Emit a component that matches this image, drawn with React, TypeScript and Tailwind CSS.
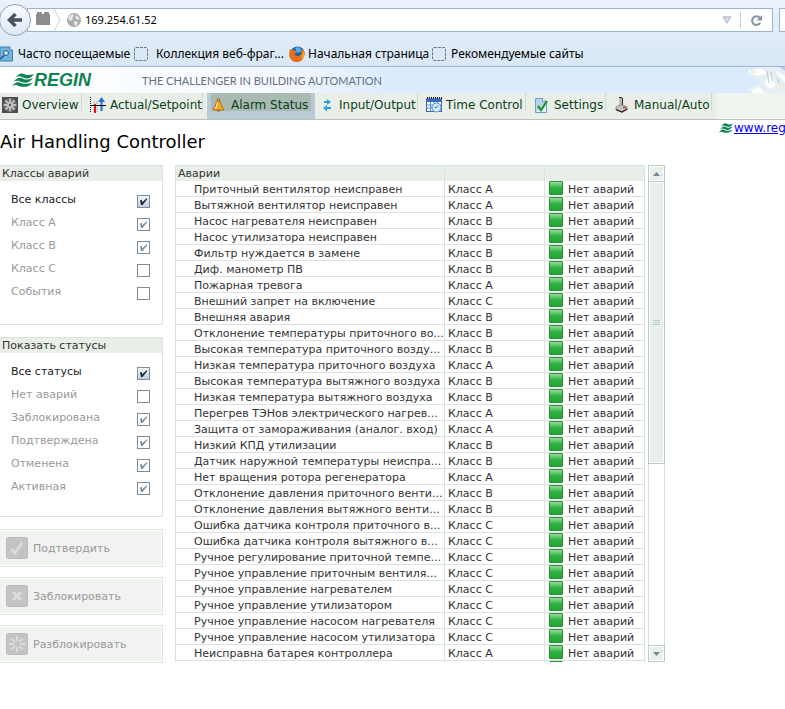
import type { ReactNode } from "react";

const alarms: [string, string][] = [
  ["Приточный вентилятор неисправен", "A"],
  ["Вытяжной вентилятор неисправен", "A"],
  ["Насос нагревателя неисправен", "B"],
  ["Насос утилизатора неисправен", "B"],
  ["Фильтр нуждается в замене", "B"],
  ["Диф. манометр ПВ", "B"],
  ["Пожарная тревога", "A"],
  ["Внешний запрет на включение", "C"],
  ["Внешняя авария", "B"],
  ["Отклонение температуры приточного во...", "B"],
  ["Высокая температура приточного возду...", "B"],
  ["Низкая температура приточного воздуха", "A"],
  ["Высокая температура вытяжного воздуха", "B"],
  ["Низкая температура вытяжного воздуха", "B"],
  ["Перегрев ТЭНов электрического нагрев...", "A"],
  ["Защита от замораживания (аналог. вход)", "A"],
  ["Низкий КПД утилизации", "B"],
  ["Датчик наружной температуры неиспра...", "B"],
  ["Нет вращения ротора регенератора", "A"],
  ["Отклонение давления приточного венти...", "B"],
  ["Отклонение давления вытяжного венти...", "B"],
  ["Ошибка датчика контроля приточного в...", "C"],
  ["Ошибка датчика контроля вытяжного в...", "C"],
  ["Ручное регулирование приточной темпе...", "C"],
  ["Ручное управление приточным вентиля...", "C"],
  ["Ручное управление нагревателем", "C"],
  ["Ручное управление утилизатором", "C"],
  ["Ручное управление насосом нагревателя", "C"],
  ["Ручное управление насосом утилизатора", "C"],
  ["Неисправна батарея контроллера", "A"],
];

type Option = { label: string; checked: boolean; enabled?: boolean };

const classes: Option[] = [
  { label: "Все классы", checked: true, enabled: true },
  { label: "Класс A", checked: true },
  { label: "Класс B", checked: true },
  { label: "Класс C", checked: false },
  { label: "События", checked: false },
];

const statuses: Option[] = [
  { label: "Все статусы", checked: true, enabled: true },
  { label: "Нет аварий", checked: false },
  { label: "Заблокирована", checked: true },
  { label: "Подтверждена", checked: true },
  { label: "Отменена", checked: true },
  { label: "Активная", checked: true },
];

function Waves({ className }: { className: string }) {
  return (
    <svg viewBox="0 0 24 16" className={className} preserveAspectRatio="none" aria-hidden="true">
      <g fill="#0d8350">
        <path d="M4 5C8-1 12 0 15 2c3 1 6 0 9-1-4 6-8 6-12 4-3-1-5-2-8 0z" />
        <path d="M2 10C6 4 10 5 13 7c3 1 6 0 10-1-5 6-9 6-13 4-3-1-5-2-8 0z" />
        <path d="M0 15c4-6 8-5 11-3 4 1 7 0 12-1-6 6-10 5-15 4-3-1-5-2-8 0z" />
      </g>
    </svg>
  );
}

function FanIcon() {
  return (
    <svg viewBox="0 0 16 16" className="size-4" aria-hidden="true">
      <rect width="16" height="16" fill="#4c4c4c" />
      <circle cx="8" cy="8" r="7" fill="#6a6a6a" />
      <g stroke="#c4c4c4" strokeWidth="1.800" strokeLinecap="round">
        <path d="M8 2.500v11M2.500 8h11M4 4l8 8M12 4l-8 8" />
      </g>
      <circle cx="8" cy="8" r="1.200" fill="#555" />
    </svg>
  );
}

function SetpointIcon() {
  return (
    <svg viewBox="0 0 16 16" className="size-4" aria-hidden="true">
      <path d="M.5 0v16" stroke="#222" strokeDasharray="1 1" />
      <path d="M4 15V5h3v10" fill="none" stroke="#999" strokeDasharray="1 1" />
      <path d="M4 7h2v9H4z" fill="#e3151b" />
      <path d="M10.500 14V5H8l3.500-5L15 5h-2.500v9z" fill="#1e70dc" />
      <path d="M0 8.500h16" stroke="#000" />
    </svg>
  );
}

function BellIcon() {
  return (
    <svg viewBox="0 0 16 16" className="size-4" aria-hidden="true">
      <circle cx="7.500" cy="3" r="1.500" fill="#e9a23a" stroke="#9a5a10" strokeWidth=".7" />
      <path d="M6.500 4C4.500 5.500 5 9 2.500 11.500V13h10v-1.500C10 9 10.500 5.500 8.500 4z" fill="#f5a623" stroke="#a85d0c" strokeWidth=".8" />
      <path d="M6.500 5.500c-1 2-.5 4-2 6" stroke="#ffe3a0" strokeWidth="1.300" fill="none" />
      <path d="M6 13h3l-.5 1.500h-2z" fill="#9c5210" />
    </svg>
  );
}

function InOutIcon() {
  return (
    <svg viewBox="0 0 16 16" className="size-4" aria-hidden="true">
      <path d="M5 4h3V2l4 3-4 3V6H5z" fill="#27a0dc" />
      <path d="M12 10H8V8l-4 3 4 3.500V12h4z" fill="#27a0dc" />
    </svg>
  );
}

function CalendarIcon() {
  return (
    <svg viewBox="0 0 16 16" className="size-4" aria-hidden="true">
      <rect x=".5" y="2" width="15" height="12.500" fill="#fff" stroke="#3568b5" />
      <path d="M1 2h14v3H1z" fill="#356bc0" />
      <path d="M1 1h15" stroke="#222" strokeWidth="2" strokeDasharray="1 1" />
      <path d="M1 8h14M1 11h14M4.500 5v9M8 5v9M11.500 5v9" stroke="#5b8ad0" />
      <circle cx="10.500" cy="10.500" r="4.500" fill="#d6eaff" stroke="#5d96dc" strokeWidth="1.200" />
      <path d="M10.500 10.500 12.500 8.500M10.500 10.500h-2" stroke="#24457e" strokeWidth=".8" />
    </svg>
  );
}

function SettingsIcon() {
  return (
    <svg viewBox="0 0 16 16" className="size-4" aria-hidden="true">
      <path d="M1.500 1.500h7l4 3v11h-11z" fill="#b5d5ea" stroke="#6ba0c2" />
      <path d="M2 15L12 5v10z" fill="#e2f0f8" />
      <path d="M8.500 1.500v3h4" fill="#fff" stroke="#6ba0c2" />
      <path d="M4 9l3 4 6-9" fill="none" stroke="#21922b" strokeWidth="2.200" />
    </svg>
  );
}

function JoystickIcon() {
  return (
    <svg viewBox="0 0 16 16" className="size-4" aria-hidden="true">
      <path d="M5 1h3v8H5z" fill="#bbb" />
      <path d="M8.500 1v8M5 .500h3" stroke="#222" />
      <path d="M2 10l4-2h3l4 2v2l-5 3-6-2z" fill="#c4c4c4" stroke="#777" strokeWidth=".7" />
      <path d="M2 12.500 8 15l5.500-3" stroke="#222" strokeWidth="1.300" fill="none" />
      <path d="M9 10.500h3" stroke="#c1342e" strokeWidth="1.500" />
    </svg>
  );
}

function NavItem({ icon, label, width, active }: { icon: ReactNode; label: string; width: string; active?: boolean }) {
  return (
    <a
      href="#"
      aria-current={active ? "page" : undefined}
      className={`flex h-[26px] shrink-0 items-start ${width} ${active ? "bg-[#b9cad5] px-1" : ""}`}
    >
      <span
        className={`flex h-[18px] grow items-start gap-1 whitespace-nowrap ${active ? "bg-[#a9bab2]" : "border-r border-[#ccdad0]"}`}
      >
        <span className="pt-1">{icon}</span>
        <span className="pt-1 leading-4">{label}</span>
      </span>
    </a>
  );
}

function FilterPanel({ title, options }: { title: string; options: Option[] }) {
  return (
    <fieldset className="border-y border-r border-[#dae5d9] pb-5">
      <legend className="float-left mb-[11px] h-[15px] w-full bg-[#e9efe8] pl-[2px] leading-[15px] text-[#333]">{title}</legend>
      {options.map((o) => (
        <label key={o.label} className="clear-both flex h-[23px] justify-between pr-3 pl-[11px]">
          <span className={`leading-4 ${o.enabled ? "text-[#222]" : "text-[#999]"}`}>{o.label}</span>
          <span className="mt-[3px] grid size-[13px]">
            <input
              type="checkbox"
              defaultChecked={o.checked}
              disabled={!o.enabled}
              className={`col-start-1 row-start-1 size-[13px] appearance-none border border-[#7b8c9a] ${o.enabled ? "bg-linear-to-b from-[#f3f7fb] to-[#bdd0e4]" : "bg-white"}`}
            />
            {o.checked && (
              <svg viewBox="0 0 13 13" className="pointer-events-none col-start-1 row-start-1 size-[13px]" aria-hidden="true">
                <path d="M3 5.500 5 5v2.500L10 3v1.500L5.500 10H4z" fill={o.enabled ? "#222" : "#7b8b99"} />
              </svg>
            )}
          </span>
        </label>
      ))}
    </fieldset>
  );
}

function ActionButton({ label, children }: { label: string; children: ReactNode }) {
  return (
    <button type="button" disabled className="flex h-[38px] w-full border-y border-r border-[#dae5d9] bg-white py-px pr-px text-[#999]">
      <span className="flex h-[34px] w-full items-center gap-[5px] bg-[#f1f3f1] pl-[6px]">
        <svg viewBox="0 0 22 22" className="size-[22px]" aria-hidden="true">
          <rect x=".5" y=".5" width="21" height="21" rx="2" fill="#c4c4c4" stroke="#bbb" />
          <g fill="none" stroke="#dcdcdc">{children}</g>
        </svg>
        <span className="pt-[2px]">{label}</span>
      </span>
    </button>
  );
}

function StatusLight() {
  return (
    <svg viewBox="0 0 14 14" className="size-[14px]" aria-hidden="true">
      <defs>
        <linearGradient id="light" x1="0" y1="0" x2="0" y2="1">
          <stop offset="0" stopColor="#a5dca6" />
          <stop offset=".5" stopColor="#2fb03c" />
          <stop offset="1" stopColor="#1fa830" />
        </linearGradient>
      </defs>
      <rect x=".5" y=".5" width="13" height="13" rx=".5" fill="url(#light)" stroke="#259234" />
    </svg>
  );
}

function BlankPageIcon() {
  return (
    <svg viewBox="0 0 14 14" className="size-[14px] shrink-0" aria-hidden="true">
      <rect x=".5" y=".5" width="13" height="13" rx="1.500" fill="none" stroke="#777" strokeDasharray="3 1" />
    </svg>
  );
}

function Chrome() {
  return (
    <div className="h-[67px] border-b border-[#a2b8d2] bg-linear-to-b from-[#eaf2fb] to-[#d8e7f6] font-['Noto_Sans','Open_Sans',sans-serif] text-[12px] text-black">
      <div className="flex h-10 items-center">
        <button type="button" aria-label="Назад" className="z-10 -ml-px size-8 shrink-0 rounded-full border border-[#8fa3bd] bg-linear-to-b from-[#fafcff] to-[#dce8f5]">
          <svg viewBox="0 0 30 30" className="size-[30px]" aria-hidden="true">
            <path d="M22 15H10M15.500 9l-6 6 6 6" fill="none" stroke="#49525f" strokeWidth="3.500" />
          </svg>
        </button>
        <div className="-ml-1 flex h-6 grow items-center border border-[#9db1ca] bg-white pl-2">
          <svg viewBox="0 0 26 22" className="h-[22px] w-[26px] shrink-0" aria-hidden="true">
            <path d="M0 5h14v11H0zM1 3h5v3H1zM8 3h5v3H8z" fill="#8c8c8c" />
            <path d="M18 0l6 11-6 11" fill="none" stroke="#ccc" />
          </svg>
          <svg viewBox="0 0 14 14" className="ml-[5px] size-[14px] shrink-0" aria-hidden="true">
            <circle cx="7" cy="7" r="7" fill="#aaa" />
            <path d="M2 3l4-2 1 2-2 2 1 2-2 1-3-2zM9 2l4 3-2 2-3-2zM7 8l4 1-1 3-2 1-1-2z" fill="#e6e6e6" />
          </svg>
          <input type="text" aria-label="Адрес" defaultValue="169.254.61.52" className="ml-1 min-w-0 grow bg-transparent text-[11px]" />
          <svg viewBox="0 0 12 10" className="mr-2 h-2 w-[10px]" aria-hidden="true">
            <path d="M1 1h10L6 9z" fill="#d5dde6" stroke="#9da9b8" />
          </svg>
          <button type="button" aria-label="Обновить" className="flex h-4 w-8 items-center justify-center border-l border-[#ccc]">
            <svg viewBox="0 0 14 14" className="size-[13px]" aria-hidden="true">
              <path d="M11 9.500A4.700 4.700 0 1 1 10.500 4" fill="none" stroke="#8493a6" strokeWidth="2.200" />
              <path d="M13 1v6H7z" fill="#8493a6" />
            </svg>
          </button>
        </div>
        <input type="text" aria-label="Поиск" className="ml-[6px] h-6 w-[6px] shrink-0 border-y border-l border-[#9db1ca] bg-white" />
      </div>
      <nav className="flex h-[26px] items-center pt-px whitespace-nowrap">
        <a href="#" className="flex w-[134px] items-center gap-[5px]">
          <svg viewBox="0 0 13 16" className="h-4 w-[13px]" aria-hidden="true">
            <path d="M0 1h10v3h2.500v11H0z" fill="#72b4dc" stroke="#3981b1" />
            <circle cx="6" cy="7" r="2.500" fill="#cce9fb" stroke="#24567e" />
            <path d="M4.500 9l-4 4" stroke="#24567e" strokeWidth="1.500" />
          </svg>
          Часто посещаемые
        </a>
        <a href="#" className="flex w-[155px] items-center gap-2">
          <BlankPageIcon />
          Коллекция веб-фраг...
        </a>
        <a href="#" className="flex w-[143px] items-center gap-[3px]">
          <svg viewBox="0 0 16 16" className="size-4 shrink-0" aria-hidden="true">
            <circle cx="8.500" cy="7.500" r="7" fill="#1e5fae" />
            <path d="M6 2c4-2 7 1 6 4-2-1-2 1-4 1z" fill="#52b3e6" />
            <path d="M1 3c1 0 2 1 3 1 2 0 3 1 4 3-2 0-3 1-2 2 2 2 5 1 6-1 1-3 0-4 2-5 2 3 2 8-1 11-4 4-11 2-12.500-3C-.3 8 .5 5 1 3z" fill="#e8701a" />
            <path d="M14 4c1.500 3 1 7-1.500 9.500 0-3 2-5 1.500-9.500z" fill="#f9c62f" />
          </svg>
          Начальная страница
        </a>
        <a href="#" className="flex items-center gap-[5px]">
          <BlankPageIcon />
          Рекомендуемые сайты
        </a>
      </nav>
    </div>
  );
}

export default function App() {
  return (
    <div className="overflow-x-hidden bg-white font-['DejaVu_Sans',Verdana,sans-serif] text-[11px] text-[#333]">
      <Chrome />
      <header className="flex h-[26px] items-center bg-linear-to-r from-white from-0% via-[#f4f9ff] via-35% to-[#dbebfe] to-50%">
        <Waves className="ml-3 h-[14px] w-[22px] shrink-0" />
        <span className="w-[108px] shrink-0 font-['Liberation_Sans',Arial,sans-serif] text-[18px] leading-6 font-bold text-[#0d8350] italic">REGIN</span>
        <span className="grow pt-[3px] font-['Lato',sans-serif] text-[11px] whitespace-nowrap text-[#657080]">THE CHALLENGER IN BUILDING AUTOMATION</span>
        <svg viewBox="0 0 44 26" className="h-[26px] w-11 shrink-0" aria-hidden="true">
          <path d="M8 2l12-2h24v26H10L6 23l8-5 6-2-3-4-10-5z" fill="#e6eff3" />
          <path d="M6 4l13-3 8 5-9 3zM23 17l6-8 6 9-6 4zM34 4l10 5v7zM10 24l8-4 6 6H12z" fill="#fff" />
          <path d="M26 4l2 12M30 5l1 9M36 10l3 9" stroke="#bccfc9" />
          <path d="M38 0h6v4z" fill="#b5cdee" />
          <path d="M10 4l5 1M38 17l4 4" stroke="#f3ecd0" strokeWidth="2" />
        </svg>
      </header>
      <nav className="flex h-[27px] border-b border-[#b5c6b8] bg-[#f0f4ef] text-[12px] text-[#0b4018]">
        <div className="flex bg-[#e9efe8] pr-1 pl-[2px]">
          <NavItem icon={<FanIcon />} label="Overview" width="w-20" />
          <NavItem icon={<span className="ml-2 block"><SetpointIcon /></span>} label="Actual/Setpoint" width="w-[121px]" />
          <span className="w-1" />
          <NavItem icon={<BellIcon />} label="Alarm Status" width="w-[108px]" active />
          <NavItem icon={<span className="ml-1 block"><InOutIcon /></span>} label="Input/Output" width="w-[103px]" />
          <NavItem icon={<span className="ml-2 block"><CalendarIcon /></span>} label="Time Control" width="w-[108px]" />
          <NavItem icon={<span className="ml-2 block"><SettingsIcon /></span>} label="Settings" width="w-20" />
          <NavItem icon={<span className="ml-2 block"><JoystickIcon /></span>} label="Manual/Auto" width="w-[106px]" />
        </div>
      </nav>
      <main>
        <div className="flex h-[45px] items-start justify-between">
          <h1 className="pt-[9px] text-[18px] leading-[26px] text-black">Air Handling Controller</h1>
          <a href="#" className="flex w-[66px] items-center gap-px text-[12px] leading-4 whitespace-nowrap text-[#0000ee] underline">
            <Waves className="h-[10px] w-[14px] shrink-0" />
            www.reg
          </a>
        </div>
        <div className="flex items-start">
          <aside className="mr-3 w-[163px] shrink-0">
            <div className="flex flex-col gap-3">
              <div className="h-40 [&>fieldset]:h-full"><FilterPanel title="Классы аварий" options={classes} /></div>
              <div className="h-[180px] [&>fieldset]:h-full"><FilterPanel title="Показать статусы" options={statuses} /></div>
            </div>
            <div className="mt-3 flex flex-col gap-[10px]">
              <ActionButton label="Подтвердить">
                <path d="M5 12l4 4 7-10" strokeWidth="3" />
              </ActionButton>
              <ActionButton label="Заблокировать">
                <path d="M7 7l8 8M15 7l-8 8" strokeWidth="3" />
              </ActionButton>
              <ActionButton label="Разблокировать">
                <path d="M11 3v5M11 14v5M3 11h5M14 11h5M5.500 5.500 9 9M13 13l3.500 3.500M16.500 5.500 13 9M9 13l-3.500 3.500" strokeWidth="2" />
              </ActionButton>
            </div>
          </aside>
          <div className="h-[497px] w-[470px] shrink-0 overflow-hidden">
            <table className="w-full table-fixed border-separate border-spacing-0 border-t border-l border-[#dae5d9] leading-[17px] [&_td]:h-4 [&_td]:border-r [&_td]:border-b [&_td]:border-[#dae5d9] [&_td]:p-0 [&_th]:h-[15px] [&_th]:border-r [&_th]:border-[#dae5d9] [&_th]:bg-[#e9efe8] [&_th]:p-0">
              <colgroup>
                <col className="w-[269px]" />
                <col className="w-[100px]" />
                <col className="w-[100px]" />
              </colgroup>
              <thead>
                <tr className="text-left leading-[15px]">
                  <th scope="col" className="font-normal"><div className="ml-[2px]">Аварии</div></th>
                  <th scope="col" />
                  <th scope="col" />
                </tr>
              </thead>
              <tbody>
                {alarms.map(([name, cls]) => (
                  <tr key={name}>
                    <td><div className="ml-[18px] h-[15px] whitespace-nowrap">{name}</div></td>
                    <td><div className="ml-[3px] h-[15px]">Класс {cls}</div></td>
                    <td><div className="ml-1 flex h-[15px] gap-[5px] whitespace-nowrap"><StatusLight />Нет аварий</div></td>
                  </tr>
                ))}
                <tr>
                  <td />
                  <td />
                  <td><div className="ml-1 h-[15px]"><StatusLight /></div></td>
                </tr>
              </tbody>
            </table>
          </div>
          <div className="ml-[3px] flex h-[497px] w-[17px] shrink-0 flex-col border-x border-[#dae5d9]">
            <button type="button" aria-label="Вверх" className="-mx-px flex h-[17px] items-center justify-center border border-[#b8cad5] bg-[#e9efe8] ring-1 ring-white ring-inset">
              <svg viewBox="0 0 7 4" className="h-1 w-[7px]" aria-hidden="true"><path d="M0 4 3.500 0 7 4z" fill="#71869a" /></svg>
            </button>
            <div className="-mx-px -mt-px flex h-[283px] items-center justify-center border border-[#b8cad5] bg-[#e9efe8] ring-1 ring-white ring-inset">
              <svg viewBox="0 0 7 5" className="h-[5px] w-[7px]" aria-hidden="true"><path d="M0 .5h7M0 2.500h7M0 4.500h7" stroke="#b8cad5" /></svg>
            </div>
            <div className="grow" />
            <button type="button" aria-label="Вниз" className="-mx-px flex h-[17px] items-center justify-center border border-[#b8cad5] bg-[#e9efe8] ring-1 ring-white ring-inset">
              <svg viewBox="0 0 7 4" className="h-1 w-[7px]" aria-hidden="true"><path d="M0 0h7L3.500 4z" fill="#71869a" /></svg>
            </button>
          </div>
        </div>
      </main>
    </div>
  );
}
